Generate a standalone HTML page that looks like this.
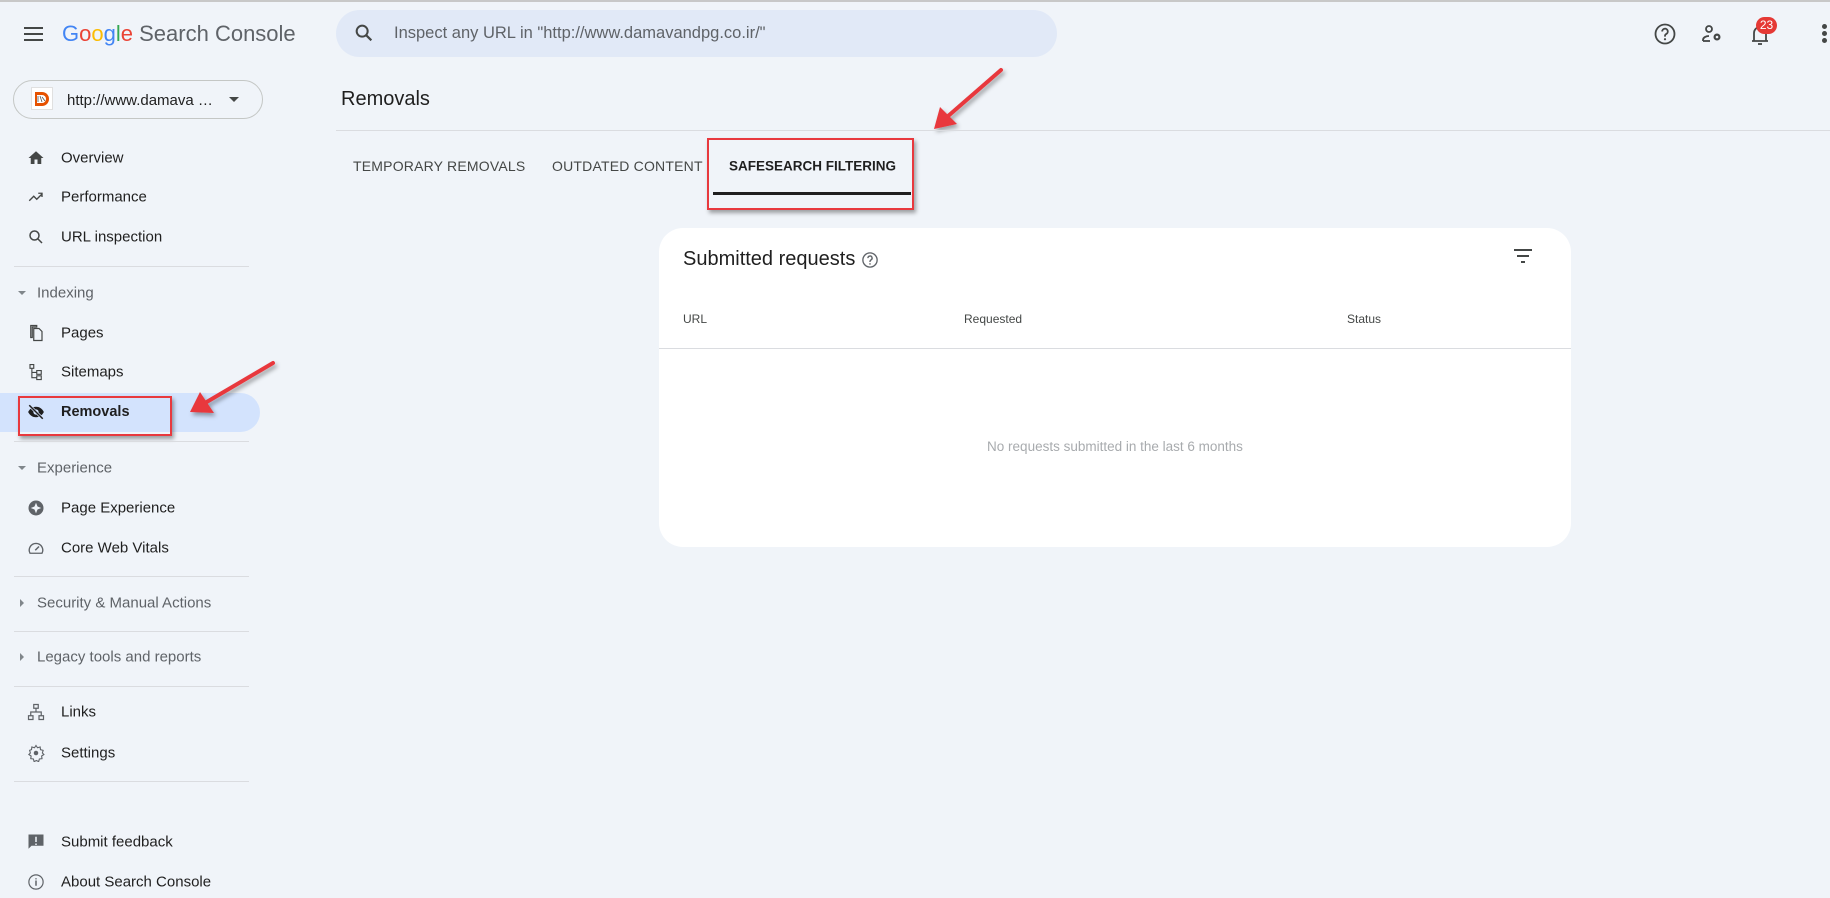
<!DOCTYPE html>
<html><head><meta charset="utf-8"><style>
*{box-sizing:border-box;margin:0;padding:0}
body{width:1830px;height:898px;background:#f0f4f9;font-family:"Liberation Sans",Arial,sans-serif;position:relative;overflow:hidden;color:#1f1f1f}
.a{position:absolute}
.topline{left:0;top:0;width:1830px;height:2px;background:#c8c8c8}
.nav{left:61px;font-size:15px;color:#1f1f1f;transform:translateY(-50%);white-space:nowrap}
.ic{left:27px;width:18px;height:18px;transform:translateY(-50%)}
.hdr{left:37px;font-size:15px;color:#5f6368;transform:translateY(-50%)}
.div{left:14px;width:235px;height:1px;background:#dadce0}
.tab{font-size:14px;letter-spacing:.2px;color:#444746;transform:translateY(-50%);white-space:nowrap}
.col{font-size:12px;color:#444746;top:312px}
</style></head><body>
<div class="a topline"></div>

<div class="a" style="left:24px;top:27px;width:19px;height:2px;background:#444746;box-shadow:0 6px 0 #444746,0 12px 0 #444746"></div>
<div class="a" style="left:62px;top:21px;font-size:22px;white-space:nowrap;color:#5f6368"><span style="color:#4285f4">G</span><span style="color:#ea4335">o</span><span style="color:#fbbc05">o</span><span style="color:#4285f4">g</span><span style="color:#34a853">l</span><span style="color:#ea4335">e</span> Search Console</div>

<div class="a" style="left:336px;top:10px;width:721px;height:47px;border-radius:24px;background:#e1e9f7"></div>
<svg class="a" style="left:353px;top:22px" width="22" height="22" viewBox="0 0 24 24"><circle cx="10" cy="10" r="6" fill="none" stroke="#444746" stroke-width="2.2"/><path d="M14.5 14.5L20 20" stroke="#444746" stroke-width="2.4"/></svg>
<div class="a" style="left:394px;top:24px;font-size:16.5px;color:#5f6368;white-space:nowrap">Inspect any URL in "http://www.damavandpg.co.ir/"</div>

<svg class="a" style="left:1653px;top:22px" width="24" height="24" viewBox="0 0 24 24"><circle cx="12" cy="12" r="9.5" fill="none" stroke="#444746" stroke-width="1.8"/><path d="M9.2 9.5a2.8 2.8 0 1 1 4 2.5c-.9.5-1.2 1-1.2 2v.6" fill="none" stroke="#444746" stroke-width="1.8"/><circle cx="12" cy="17.2" r="1.1" fill="#444746"/></svg>
<svg class="a" style="left:1700px;top:22px" width="24" height="24" viewBox="0 0 24 24"><circle cx="9" cy="7" r="3" fill="none" stroke="#444746" stroke-width="1.8"/><path d="M3 19v-1c0-2.5 3-4 6-4" fill="none" stroke="#444746" stroke-width="1.8"/><path d="M3 19h7" stroke="#444746" stroke-width="1.8"/><circle cx="17" cy="15" r="3.5" fill="#444746"/><circle cx="17" cy="15" r="1.3" fill="#f0f4f9"/></svg>
<svg class="a" style="left:1748px;top:22px" width="24" height="26" viewBox="0 0 24 26"><path d="M6 19V11a6 6 0 0 1 12 0v8H6zM4 19h16" fill="none" stroke="#444746" stroke-width="1.8"/><path d="M10 22h4" stroke="#444746" stroke-width="1.8"/></svg>
<div class="a" style="left:1756px;top:17px;width:21px;height:17px;border-radius:9px;background:#e53935;color:#fff;font-size:12px;text-align:center;line-height:17px">23</div>
<div class="a" style="left:1822px;top:24px;width:5px;height:5px;border-radius:50%;background:#444746;box-shadow:0 7px 0 #444746,0 14px 0 #444746"></div>

<div class="a" style="left:13px;top:80px;width:250px;height:39px;border:1px solid #c4c7c5;border-radius:20px"></div>
<div class="a" style="left:31px;top:87px;width:22px;height:23px;background:#fff;border:1px solid #e0e0e0"></div>
<svg class="a" style="left:33px;top:89px" width="18" height="19" viewBox="0 0 18 19"><path d="M2 3h7a7 7 0 0 1 0 14H2z" fill="#e65100"/><path d="M4 6h5a4 4 0 0 1 0 8H4z" fill="#fff"/><path d="M5 7v6M7 7l2 6M9 8l3 4" stroke="#555" stroke-width=".8"/></svg>
<div class="a" style="left:67px;top:92px;font-size:15px;color:#1f1f1f;white-space:nowrap">http://www.damava …</div>
<div class="a" style="left:229px;top:97px;border-left:5px solid transparent;border-right:5px solid transparent;border-top:5px solid #444746"></div>

<svg class="ic a" style="top:158px" viewBox="0 0 24 24"><path d="M10 20v-6h4v6h5v-8h3L12 3 2 12h3v8z" fill="#444746"/></svg>
<div class="a nav" style="top:158px">Overview</div>
<svg class="ic a" style="top:197px" viewBox="0 0 24 24"><path d="M3 17l6-6 4 4 7-7M15 7h5v5" fill="none" stroke="#444746" stroke-width="1.8"/></svg>
<div class="a nav" style="top:197px">Performance</div>
<svg class="ic a" style="top:237px" viewBox="0 0 24 24"><circle cx="10" cy="10" r="6" fill="none" stroke="#444746" stroke-width="2"/><path d="M14.5 14.5L20 20" stroke="#444746" stroke-width="2"/></svg>
<div class="a nav" style="top:237px">URL inspection</div>
<div class="a div" style="top:266px"></div>

<div class="a" style="left:18px;top:291px;border-left:4px solid transparent;border-right:4px solid transparent;border-top:4px solid #80868b"></div>
<div class="a hdr" style="top:293px">Indexing</div>
<svg class="ic a" style="top:333px" viewBox="0 0 24 24"><path d="M9 6h7l4 4v12H9z M5 2h8v2H7v14H5z" fill="none" stroke="#444746" stroke-width="1.6"/></svg>
<div class="a nav" style="top:333px">Pages</div>
<svg class="ic a" style="top:372px" viewBox="0 0 24 24"><path d="M4 2h5v5H4zM13 10h6v5h-6zM13 17h6v5h-6zM6.5 7v12.5H13M6.5 12.5H13" fill="none" stroke="#444746" stroke-width="1.5"/></svg>
<div class="a nav" style="top:372px">Sitemaps</div>

<div class="a" style="left:0;top:393px;width:260px;height:39px;background:#d3e3fd;border-radius:0 20px 20px 0"></div>
<svg class="ic a" style="top:412px" viewBox="0 0 24 24"><path d="M1.5 12C4 7 8 5 12 5s8 2 10.5 7C20 17 16 19 12 19S4 17 1.5 12z" fill="#1f1f1f"/><circle cx="12" cy="12" r="3.5" fill="#d3e3fd"/><path d="M3 3l18 18" stroke="#d3e3fd" stroke-width="4"/><path d="M3 3l18 18" stroke="#1f1f1f" stroke-width="2"/></svg>
<div class="a nav" style="top:412px;font-weight:bold;font-size:14.5px">Removals</div>
<div class="a" style="left:18px;top:396px;width:154px;height:40px;border:2.5px solid #e8393e;box-shadow:2px 3px 4px rgba(0,0,0,.35)"></div>
<div class="a div" style="top:441px"></div>

<div class="a" style="left:18px;top:466px;border-left:4px solid transparent;border-right:4px solid transparent;border-top:4px solid #80868b"></div>
<div class="a hdr" style="top:468px">Experience</div>
<svg class="ic a" style="top:508px" viewBox="0 0 24 24"><circle cx="12" cy="12" r="10" fill="#5f6368"/><path d="M12 5l2 5 5 2-5 2-2 5-2-5-5-2 5-2z" fill="#f0f4f9"/></svg>
<div class="a nav" style="top:508px">Page Experience</div>
<svg class="ic a" style="top:548px" viewBox="0 0 24 24"><path d="M4 19a9 9 0 1 1 16 0z" fill="none" stroke="#5f6368" stroke-width="1.8"/><path d="M11 15l5-5" stroke="#5f6368" stroke-width="2"/></svg>
<div class="a nav" style="top:548px">Core Web Vitals</div>
<div class="a div" style="top:576px"></div>

<div class="a" style="left:20px;top:599px;border-top:4px solid transparent;border-bottom:4px solid transparent;border-left:4px solid #80868b"></div>
<div class="a hdr" style="top:603px">Security &amp; Manual Actions</div>
<div class="a div" style="top:631px"></div>
<div class="a" style="left:20px;top:653px;border-top:4px solid transparent;border-bottom:4px solid transparent;border-left:4px solid #80868b"></div>
<div class="a hdr" style="top:657px">Legacy tools and reports</div>
<div class="a div" style="top:686px"></div>

<svg class="ic a" style="top:712px" viewBox="0 0 24 24"><path d="M9 2h6v5H9zM2 17h6v5H2zM16 17h6v5h-6zM12 7v5M5 17v-5h14v5" fill="none" stroke="#5f6368" stroke-width="1.6"/></svg>
<div class="a nav" style="top:712px">Links</div>
<svg class="ic a" style="top:753px" viewBox="0 0 24 24"><path d="M12 2l2 3 3.5-1 .5 3.5 3.5 1-1 3.5 2 2-3 2 .5 3.5-3.5.5-1 3.5-3-1.5-3 1.5-1-3.5-3.5-.5.5-3.5-3-2 2-2-1-3.5L6 7.5 6.5 4 10 5z" fill="none" stroke="#5f6368" stroke-width="1.5"/><circle cx="12" cy="12" r="3" fill="#5f6368"/></svg>
<div class="a nav" style="top:753px">Settings</div>
<div class="a div" style="top:781px"></div>

<svg class="ic a" style="top:842px" viewBox="0 0 24 24"><path d="M2 2h20v15H6l-4 4z" fill="#5f6368"/><path d="M12 5v7M12 14v2" stroke="#f0f4f9" stroke-width="2"/></svg>
<div class="a nav" style="top:842px">Submit feedback</div>
<svg class="ic a" style="top:882px" viewBox="0 0 24 24"><circle cx="12" cy="12" r="9.5" fill="none" stroke="#5f6368" stroke-width="1.6"/><path d="M12 10v7M12 7v1.5" stroke="#5f6368" stroke-width="2"/></svg>
<div class="a nav" style="top:882px">About Search Console</div>

<svg class="a" style="left:0;top:0" width="1830" height="898" viewBox="0 0 1830 898">
<defs><filter id="sh"><feDropShadow dx="2" dy="3" stdDeviation="2" flood-opacity=".35"/></filter></defs>
<g filter="url(#sh)">
<path d="M273 363L205 403" stroke="#e8393e" stroke-width="4" stroke-linecap="round"/>
<path d="M190 412L200 392L214 413z" fill="#e8393e"/>
<path d="M1001 70L947 117" stroke="#e8393e" stroke-width="4" stroke-linecap="round"/>
<path d="M934 129L940 107L957 124z" fill="#e8393e"/>
</g></svg>

<div class="a" style="left:341px;top:88px;font-size:20px;color:#1f1f1f">Removals</div>
<div class="a" style="left:336px;top:130px;width:1494px;height:1px;background:#dadce0"></div>

<div class="a tab" style="left:353px;top:166px">TEMPORARY REMOVALS</div>
<div class="a tab" style="left:552px;top:166px">OUTDATED CONTENT</div>
<div class="a tab" style="left:729px;top:166px;color:#1f1f1f;font-weight:bold;font-size:13.5px;letter-spacing:0">SAFESEARCH FILTERING</div>
<div class="a" style="left:713px;top:192px;width:198px;height:3px;background:#1f1f1f"></div>
<div class="a" style="left:707px;top:138px;width:207px;height:72px;border:2.5px solid #e8393e;box-shadow:2px 3px 4px rgba(0,0,0,.35)"></div>

<div class="a" style="left:659px;top:228px;width:912px;height:319px;background:#fff;border-radius:24px"></div>
<div class="a" style="left:683px;top:248px;font-size:20px;color:#1f1f1f">Submitted requests</div>
<svg class="a" style="left:861px;top:251px" width="18" height="18" viewBox="0 0 24 24"><circle cx="12" cy="12" r="9.5" fill="none" stroke="#5f6368" stroke-width="1.8"/><path d="M9.2 9.5a2.8 2.8 0 1 1 4 2.5c-.9.5-1.2 1-1.2 2v.6" fill="none" stroke="#5f6368" stroke-width="1.8"/><circle cx="12" cy="17.2" r="1.1" fill="#5f6368"/></svg>
<div class="a" style="left:1514px;top:249px;width:18px;height:2px;background:#444746"></div>
<div class="a" style="left:1517px;top:255px;width:12px;height:2px;background:#444746"></div>
<div class="a" style="left:1521px;top:261px;width:4px;height:2px;background:#444746"></div>
<div class="a col" style="left:683px">URL</div>
<div class="a col" style="left:964px">Requested</div>
<div class="a col" style="left:1347px">Status</div>
<div class="a" style="left:659px;top:348px;width:912px;height:1px;background:#dadce0"></div>
<div class="a" style="left:659px;top:439px;width:912px;text-align:center;font-size:13.5px;color:#a8abae">No requests submitted in the last 6 months</div>
</body></html>
